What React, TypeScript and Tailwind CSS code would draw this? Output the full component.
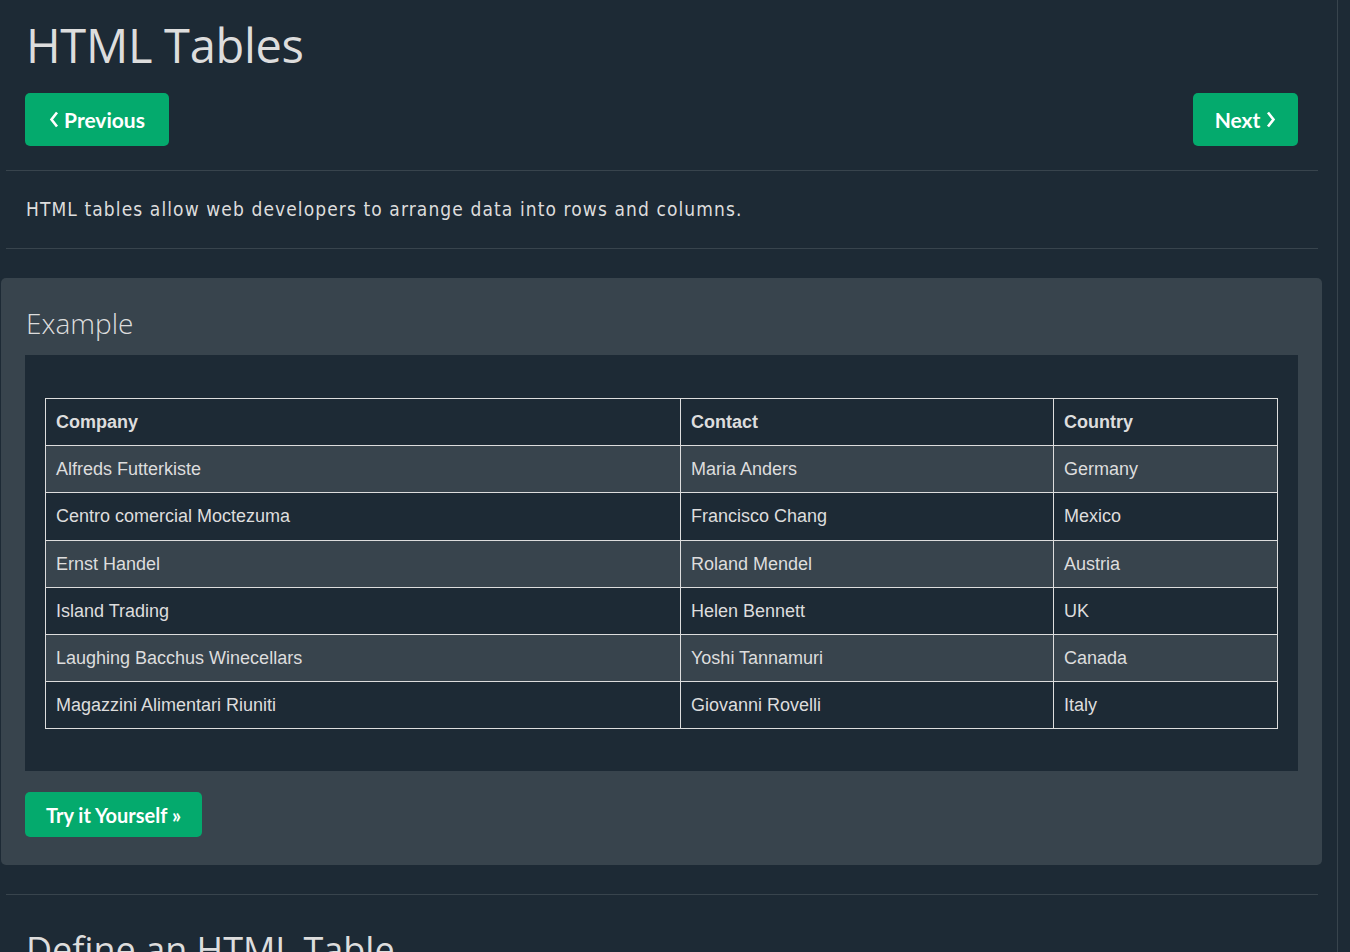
import React from 'react'

const ROWS = [
  ['Alfreds Futterkiste', 'Maria Anders', 'Germany'],
  ['Centro comercial Moctezuma', 'Francisco Chang', 'Mexico'],
  ['Ernst Handel', 'Roland Mendel', 'Austria'],
  ['Island Trading', 'Helen Bennett', 'UK'],
  ['Laughing Bacchus Winecellars', 'Yoshi Tannamuri', 'Canada'],
  ['Magazzini Alimentari Riuniti', 'Giovanni Rovelli', 'Italy'],
]

const ROW_H = ['h-[47px]', 'h-[48px]', 'h-[47px]', 'h-[47px]', 'h-[47px]', 'h-[47px]']

const heading = { fontFamily: '"Open Sans", "Noto Sans", sans-serif' }
const btnFont = { fontFamily: 'Lato, "Open Sans", sans-serif' }

function Chevron({ dir }: { dir: 'left' | 'right' }) {
  return (
    <svg width="10" height="17" viewBox="0 0 10 17" className="shrink-0">
      <path
        d={dir === 'left' ? 'M8 1.5 L2.5 8.5 L8 15.5' : 'M2 1.5 L7.5 8.5 L2 15.5'}
        fill="none"
        stroke="white"
        strokeWidth="2.6"
        strokeLinejoin="miter"
      />
    </svg>
  )
}

export default function App() {
  return (
    <div className="min-h-[952px] bg-[#1d2a35] text-[#ddd] flex overflow-hidden">
      <div className="w-[1338px] shrink-0 border-r border-[#38444d] pb-10">
        {/* Title */}
        <h1
          className="ml-[26px] pt-[14px] text-[47px] leading-[62px] font-normal text-[#ddd] tracking-[-0.3px]"
          style={heading}
        >
          HTML Tables
        </h1>

        {/* Nav buttons */}
        <div className="flex justify-between ml-[25px] mr-[39px] mt-[17px]">
          <button
            className="h-[53px] w-[144px] bg-[#04aa6d] rounded-[5px] flex items-center justify-center gap-[5px] text-white text-[21px] font-bold"
            style={btnFont}
          >
            <Chevron dir="left" />
            Previous
          </button>
          <button
            className="h-[53px] w-[105px] bg-[#04aa6d] rounded-[5px] flex items-center justify-center gap-[6px] text-white text-[21px] font-bold"
            style={btnFont}
          >
            Next
            <Chevron dir="right" />
          </button>
        </div>

        <div className="ml-[6px] mr-[19px] mt-[24px] h-px bg-[#38444d]" />

        <p
          className="ml-[26px] h-[77px] flex items-center text-[19px] tracking-[1.1px] text-[#ddd]"
          style={{ fontFamily: '"DejaVu Sans Condensed", "DejaVu Sans", Verdana, sans-serif' }}
        >
          HTML tables allow web developers to arrange data into rows and columns.
        </p>

        <div className="ml-[6px] mr-[19px] h-px bg-[#38444d]" />

        {/* Example panel */}
        <div className="ml-[1px] mr-[15px] mt-[29px] bg-[#38444d] rounded-[5px] px-[24px] pt-[24px] pb-[28px]">
          <h2 className="text-[28px] leading-[42px] font-light text-[#ddd] ml-px" style={heading}>
            Example
          </h2>
          <div className="mt-[11px] bg-[#1d2a35] px-[20px] pt-[43px] pb-[42px]">
            <table
              className="w-full border-collapse text-[18px] text-[#ddd]"
              style={{ fontFamily: '"Liberation Sans", Arial, sans-serif' }}
            >
              <thead>
                <tr>
                  <th className="w-[635px] h-[47px] border border-[#ddd] pl-[10px] text-left font-bold">Company</th>
                  <th className="w-[373px] h-[47px] border border-[#ddd] pl-[10px] text-left font-bold">Contact</th>
                  <th className="h-[47px] border border-[#ddd] pl-[10px] text-left font-bold">Country</th>
                </tr>
              </thead>
              <tbody>
                {ROWS.map((r, i) => (
                  <tr key={r[0]} className={i % 2 === 0 ? 'bg-[#38444d]' : 'bg-[#1d2a35]'}>
                    {r.map(c => (
                      <td key={c} className={`${ROW_H[i]} border border-[#ddd] pl-[10px]`}>
                        {c}
                      </td>
                    ))}
                  </tr>
                ))}
              </tbody>
            </table>
          </div>
          <button
            className="mt-[21px] h-[45px] w-[177px] bg-[#04aa6d] rounded-[5px] text-white text-[20px] font-bold"
            style={btnFont}
          >
            Try it Yourself »
          </button>
        </div>

        <div className="ml-[6px] mr-[19px] mt-[29px] h-px bg-[#38444d]" />

        <h2 className="ml-[26px] mt-[30px] text-[36px] leading-[50px] font-normal text-[#ddd]" style={heading}>
          Define an HTML Table
        </h2>
      </div>
      <div className="flex-1" />
    </div>
  )
}
